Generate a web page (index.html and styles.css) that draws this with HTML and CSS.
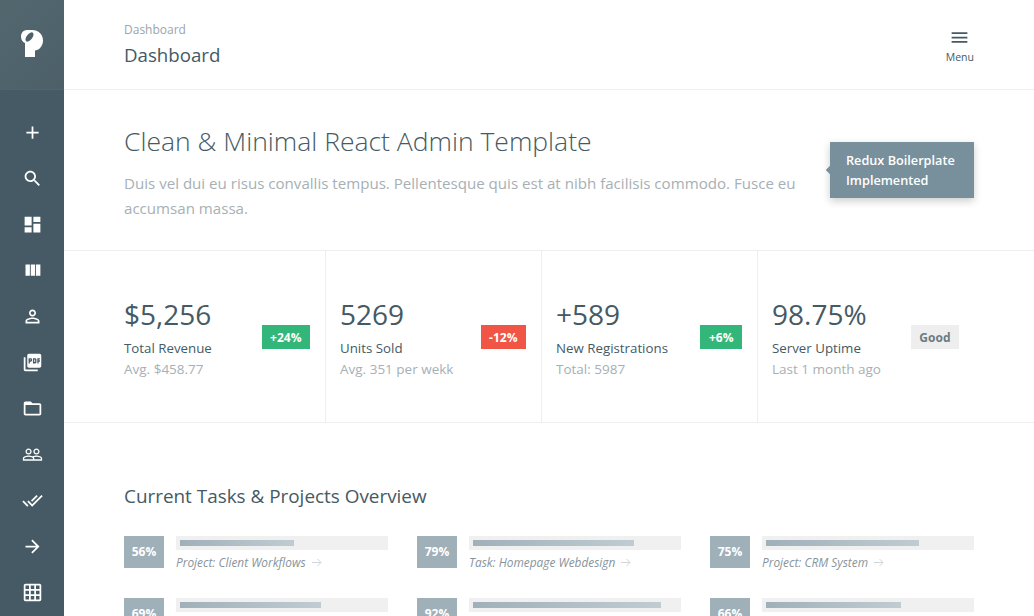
FILE: index.html
```html
<!DOCTYPE html>
<html lang="en">
<head>
    <meta charset="UTF-8">
    <title>Dashboard</title>
    <link rel="stylesheet" href="styles.css">
</head>
<body>
    <aside class="sidebar">
        <div class="logo">
            <svg width="22" height="27" viewBox="0 0 22 27"><path fill="#fff" d="M6 0h5c6.500 0 11 4.500 11 10.500 0 6-4.500 10-8 10V27H4V13C1.500 12 0 9.500 0 6.500 0 2.800 2.800 0 6 0z"/><ellipse class="logo-cut" cx="8.500" cy="7" rx="5.500" ry="2.800" transform="rotate(-52 8.500 7)"/></svg>
        </div>
        <nav class="side-nav">
            <a class="side-icon"><svg viewBox="0 0 24 24"><path d="M19 13h-6v6h-2v-6H5v-2h6V5h2v6h6v2z"/></svg></a>
            <a class="side-icon"><svg viewBox="0 0 24 24"><path d="M15.5 14h-.79l-.28-.27C15.410 12.590 16 11.110 16 9.500 16 5.910 13.090 3 9.500 3S3 5.910 3 9.500 5.910 16 9.500 16c1.610 0 3.090-.59 4.230-1.570l.27.28v.79l5 4.990L20.490 19l-4.990-5zm-6 0C7.010 14 5 11.990 5 9.500S7.010 5 9.500 5 14 7.010 14 9.500 11.990 14 9.500 14z"/></svg></a>
            <a class="side-icon"><svg viewBox="0 0 24 24"><path d="M3 13h8V3H3v10zm0 8h8v-6H3v6zm10 0h8V11h-8v10zm0-18v6h8V3h-8z"/></svg></a>
            <a class="side-icon"><svg viewBox="0 0 24 24"><path d="M10 18h5V5h-5v13zm-6 0h5V5H4v13zM16 5v13h5V5h-5z"/></svg></a>
            <a class="side-icon"><svg viewBox="0 0 24 24"><path d="M12 5.900c1.160 0 2.100.94 2.100 2.100s-.94 2.100-2.100 2.100S9.900 9.160 9.900 8s.94-2.100 2.100-2.100m0 9c2.970 0 6.100 1.460 6.100 2.100v1.100H5.900V17c0-.64 3.130-2.100 6.100-2.100M12 4C9.790 4 8 5.790 8 8s1.790 4 4 4 4-1.790 4-4-1.790-4-4-4zm0 9c-2.670 0-8 1.340-8 4v3h16v-3c0-2.660-5.330-4-8-4z"/></svg></a>
            <a class="side-icon"><svg viewBox="0 0 24 24"><path d="M20 2H8c-1.100 0-2 .9-2 2v12c0 1.100.9 2 2 2h12c1.100 0 2-.9 2-2V4c0-1.100-.9-2-2-2zm-8.500 7.500c0 .83-.67 1.500-1.500 1.500H9v2H7.500V7H10c.83 0 1.500.67 1.500 1.500v1zm5 2c0 .83-.67 1.500-1.500 1.500h-2.500V7H15c.83 0 1.500.67 1.500 1.500v3zm4-3H19v1h1.500V11H19v2h-1.500V7h3v1.500zM9 9.500h1v-1H9v1zM4 6H2v14c0 1.100.9 2 2 2h14v-2H4V6zm10 5.500h1v-3h-1v3z"/></svg></a>
            <a class="side-icon"><svg viewBox="0 0 24 24"><path d="M20 6h-8l-2-2H4c-1.100 0-1.990.9-1.990 2L2 18c0 1.100.9 2 2 2h16c1.100 0 2-.9 2-2V8c0-1.100-.9-2-2-2zm0 12H4V8h16v10z"/></svg></a>
            <a class="side-icon"><svg viewBox="0 0 24 24"><path d="M16.500 13c-1.200 0-3.070.34-4.500 1-1.430-.67-3.300-1-4.500-1C5.330 13 1 14.080 1 16.250V19h22v-2.750c0-2.170-4.330-3.250-6.500-3.250zm-4 4.500h-10v-1.250c0-.54 2.560-1.750 5-1.750s5 1.210 5 1.750v1.250zm9 0H14v-1.250c0-.46-.2-.86-.52-1.220.88-.3 1.960-.53 3.020-.53 2.440 0 5 1.210 5 1.750v1.250zM7.500 12c1.930 0 3.500-1.570 3.500-3.500S9.430 5 7.500 5 4 6.570 4 8.500 5.570 12 7.500 12zm0-5.500c1.100 0 2 .9 2 2s-.9 2-2 2-2-.9-2-2 .9-2 2-2zm9 5.500c1.930 0 3.500-1.570 3.500-3.500S18.430 5 16.500 5 13 6.570 13 8.500s1.570 3.500 3.500 3.500zm0-5.500c1.100 0 2 .9 2 2s-.9 2-2 2-2-.9-2-2 .9-2 2-2z"/></svg></a>
            <a class="side-icon"><svg viewBox="0 0 24 24"><path d="M18 7l-1.410-1.410-6.340 6.340 1.410 1.410L18 7zm4.240-1.410L11.660 16.170 7.480 12l-1.410 1.410L11.660 19l12-12-1.420-1.410zM.41 13.410L6 19l1.410-1.410L1.830 12 .41 13.410z"/></svg></a>
            <a class="side-icon"><svg viewBox="0 0 24 24"><path d="M12 4l-1.410 1.410L16.170 11H4v2h12.170l-5.580 5.590L12 20l8-8z"/></svg></a>
            <a class="side-icon"><svg viewBox="0 0 24 24"><path d="M20 2H4c-1.100 0-2 .9-2 2v16c0 1.100.9 2 2 2h16c1.100 0 2-.9 2-2V4c0-1.100-.9-2-2-2zM8 20H4v-4h4v4zm0-6H4v-4h4v4zm0-6H4V4h4v4zm6 12h-4v-4h4v4zm0-6h-4v-4h4v4zm0-6h-4V4h4v4zm6 12h-4v-4h4v4zm0-6h-4v-4h4v4zm0-6h-4V4h4v4z"/></svg></a>
        </nav>
    </aside>

    <main class="content">
        <header class="topbar">
            <div>
                <div class="crumb">Dashboard</div>
                <h1 class="page-title">Dashboard</h1>
            </div>
            <div class="menu-btn">
                <svg viewBox="0 0 24 24" width="21" height="21"><path d="M3 18h18v-2H3v2zm0-5h18v-2H3v2zm0-7v2h18V6H3z"/></svg>
                <span>Menu</span>
            </div>
        </header>

        <section class="hero">
            <div class="hero-text">
                <h2>Clean &amp; Minimal React Admin Template</h2>
                <p>Duis vel dui eu risus convallis tempus. Pellentesque quis est at nibh facilisis commodo. Fusce eu accumsan massa.</p>
            </div>
            <div class="note">Redux Boilerplate Implemented</div>
        </section>

        <section class="stats">
            <div class="stat">
                <div>
                    <div class="stat-num">$5,256</div>
                    <div class="stat-label">Total Revenue</div>
                    <div class="stat-sub">Avg. $458.77</div>
                </div>
                <span class="badge green">+24%</span>
            </div>
            <div class="stat">
                <div>
                    <div class="stat-num">5269</div>
                    <div class="stat-label">Units Sold</div>
                    <div class="stat-sub">Avg. 351 per wekk</div>
                </div>
                <span class="badge red">-12%</span>
            </div>
            <div class="stat">
                <div>
                    <div class="stat-num">+589</div>
                    <div class="stat-label">New Registrations</div>
                    <div class="stat-sub">Total: 5987</div>
                </div>
                <span class="badge green">+6%</span>
            </div>
            <div class="stat">
                <div>
                    <div class="stat-num">98.75%</div>
                    <div class="stat-label">Server Uptime</div>
                    <div class="stat-sub">Last 1 month ago</div>
                </div>
                <span class="badge grey">Good</span>
            </div>
        </section>

        <section class="tasks">
            <h3>Current Tasks &amp; Projects Overview</h3>
            <div class="task-grid">
                <div class="task">
                    <div class="pct">56%</div>
                    <div class="task-body">
                        <div class="track"><div class="fill" style="width: 56%"></div></div>
                        <div class="task-name">Project: Client Workflows <svg class="arrow" viewBox="0 0 10 9"><path d="M0 4.500h9M5.500 1l3.500 3.500L5.500 8"/></svg></div>
                    </div>
                </div>
                <div class="task">
                    <div class="pct">79%</div>
                    <div class="task-body">
                        <div class="track"><div class="fill" style="width: 79%"></div></div>
                        <div class="task-name">Task: Homepage Webdesign <svg class="arrow" viewBox="0 0 10 9"><path d="M0 4.500h9M5.500 1l3.500 3.500L5.500 8"/></svg></div>
                    </div>
                </div>
                <div class="task">
                    <div class="pct">75%</div>
                    <div class="task-body">
                        <div class="track"><div class="fill" style="width: 75%"></div></div>
                        <div class="task-name">Project: CRM System <svg class="arrow" viewBox="0 0 10 9"><path d="M0 4.500h9M5.500 1l3.500 3.500L5.500 8"/></svg></div>
                    </div>
                </div>
                <div class="task">
                    <div class="pct">69%</div>
                    <div class="task-body">
                        <div class="track"><div class="fill" style="width: 69%"></div></div>
                        <div class="task-name">Project: Client Workflows <svg class="arrow" viewBox="0 0 10 9"><path d="M0 4.500h9M5.500 1l3.500 3.500L5.500 8"/></svg></div>
                    </div>
                </div>
                <div class="task">
                    <div class="pct">92%</div>
                    <div class="task-body">
                        <div class="track"><div class="fill" style="width: 92%"></div></div>
                        <div class="task-name">Task: Homepage Webdesign <svg class="arrow" viewBox="0 0 10 9"><path d="M0 4.500h9M5.500 1l3.500 3.500L5.500 8"/></svg></div>
                    </div>
                </div>
                <div class="task">
                    <div class="pct">66%</div>
                    <div class="task-body">
                        <div class="track"><div class="fill" style="width: 66%"></div></div>
                        <div class="task-name">Project: CRM System <svg class="arrow" viewBox="0 0 10 9"><path d="M0 4.500h9M5.500 1l3.500 3.500L5.500 8"/></svg></div>
                    </div>
                </div>
            </div>
        </section>
    </main>
</body>
</html>
```

FILE: styles.css
```css
html, body {
    height: 100%;
}
body {
    margin: 0;
    display: flex;
    overflow: hidden;
    font-family: "Open Sans", "Noto Sans", sans-serif;
    color: #455a64;
    background-color: #fff;
}
.sidebar {
    width: 64px;
    flex: none;
    background-color: #455a64;
}
.logo {
    height: 90px;
    box-sizing: border-box;
    padding-bottom: 3px;
    display: flex;
    align-items: center;
    justify-content: center;
    background: linear-gradient(135deg, #53676f, #4d606a);
    border-bottom: 1px solid #52656f;
}
.logo-cut {
    fill: #4f626c;
}
.side-nav {
    padding-top: 19px;
}
.side-icon {
    height: 46px;
    display: flex;
    align-items: center;
    justify-content: center;
}
.side-icon svg {
    width: 21px;
    height: 21px;
    fill: #fff;
}
.content {
    flex: 1;
    min-width: 0;
}
.topbar {
    height: 90px;
    box-sizing: border-box;
    padding: 0 60px;
    display: flex;
    align-items: center;
    justify-content: space-between;
    border-bottom: 1px solid #eee;
}
.crumb {
    font-size: 12px;
    line-height: 18px;
    color: #9aa5ab;
}
.page-title {
    margin: 3px 0 0;
    font-size: 18.700px;
    line-height: 26px;
    font-weight: 400;
}
.menu-btn {
    display: flex;
    flex-direction: column;
    align-items: center;
    font-size: 10.500px;
    line-height: 14px;
    margin-top: 2px;
}
.menu-btn svg {
    margin-bottom: 2px;
    fill: #455a64;
}
.hero {
    height: 160px;
    padding: 0 60px;
    display: flex;
    align-items: flex-start;
    justify-content: space-between;
    border-bottom: 1px solid #eee;
}
.hero-text {
    width: 680px;
}
.hero h2 {
    margin: 33px 0 0;
    font-size: 26.500px;
    line-height: 36px;
    font-weight: 300;
}
.hero p {
    margin: 12px 0 0;
    font-size: 15.100px;
    line-height: 25px;
    color: #a6b0b5;
}
.note {
    position: relative;
    margin-top: 52px;
    width: 144px;
    box-sizing: border-box;
    padding: 8px 16px;
    font-size: 12.700px;
    line-height: 20px;
    font-weight: 600;
    color: #fff;
    background-color: #78909c;
    box-shadow: 0 3px 8px rgba(0, 0, 0, 0.2);
}
.note::before {
    content: "";
    position: absolute;
    left: -3px;
    top: 25px;
    width: 6px;
    height: 6px;
    transform: rotate(45deg);
    background-color: #78909c;
}
.stats {
    height: 171px;
    padding: 0 60px 0 46px;
    display: grid;
    grid-template-columns: repeat(4, 1fr);
    border-bottom: 1px solid #eee;
}
.stat {
    padding: 0 15px 0 14px;
    display: flex;
    align-items: center;
    justify-content: space-between;
    border-right: 1px solid #eee;
}
.stat:last-child {
    border-right: 0;
}
.stat-num {
    font-size: 28px;
    line-height: 40px;
}
.stat-label {
    margin-top: 4px;
    font-size: 13.300px;
    line-height: 20px;
}
.stat-sub {
    margin-top: 1px;
    font-size: 13.500px;
    line-height: 20px;
    color: #a6b0b5;
}
.badge {
    height: 24px;
    padding: 0 8.500px;
    font-size: 12px;
    line-height: 25px;
    font-weight: 700;
    color: #fff;
}
.green {
    background-color: #33b679;
}
.red {
    background-color: #f15545;
}
.grey {
    color: #6b7b83;
    background-color: #eee;
}
.tasks {
    padding: 59px 60px 0;
}
.tasks h3 {
    margin: 0;
    font-size: 18.900px;
    line-height: 28px;
    font-weight: 400;
}
.task-grid {
    margin-top: 26px;
    display: grid;
    grid-template-columns: repeat(3, 1fr);
    column-gap: 29px;
    row-gap: 28px;
}
.task {
    display: flex;
    gap: 12px;
}
.pct {
    flex: none;
    width: 40px;
    height: 32px;
    font-size: 12px;
    line-height: 32px;
    font-weight: 700;
    text-align: center;
    color: #fff;
    background-color: #a0b0b9;
}
.task-body {
    flex: 1;
}
.track {
    height: 14px;
    padding: 4px;
    box-sizing: border-box;
    background-color: #f0f0f0;
}
.fill {
    height: 6px;
    background: linear-gradient(to right, #a0b0b9, #c0ccd2);
}
.task-name {
    margin-top: 4px;
    font-size: 11.900px;
    line-height: 16px;
    font-style: italic;
    color: #87949b;
}
.arrow {
    width: 10px;
    height: 9px;
    margin-left: 3px;
    fill: none;
    stroke: #d0d6d9;
    stroke-width: 1;
}
```
